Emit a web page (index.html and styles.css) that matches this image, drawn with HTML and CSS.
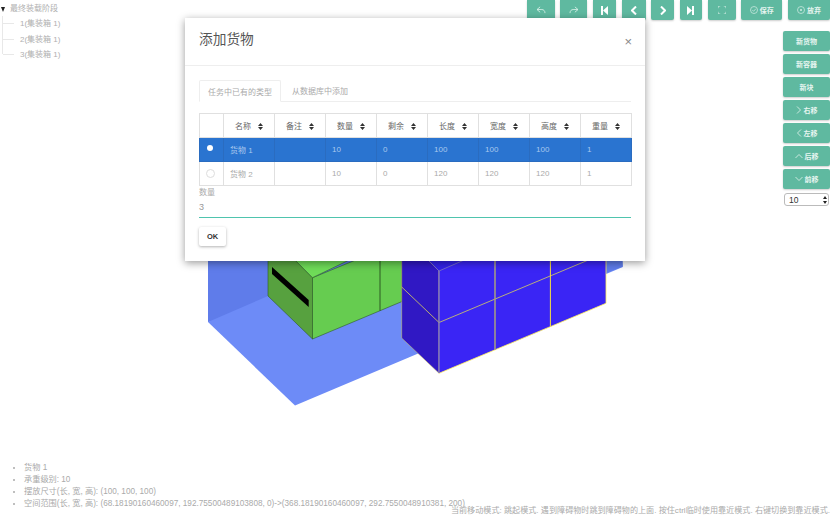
FILE: index.html
```html
<!DOCTYPE html>
<html lang="zh">
<head>
<meta charset="utf-8">
<title>添加货物</title>
<link rel="stylesheet" href="styles.css">
</head>
<body>
<svg class="scene" width="830" height="518" viewBox="0 0 830 518">
  <polygon fill="#5f7cea" points="208,250 622,250 622.7,267 208,322"/>
  <polygon fill="#6d8bf7" points="208,322 295,405.5 622.7,267 606,250 268,296"/>
  <polygon fill="#5f7cea" points="606,250 622,250 622.7,266.5 606,273"/>
  <polygon fill="#57a13f" stroke="#2d5a22" stroke-width=".6" points="268,250 268,296 312.5,339 312.5,277.7 296,261 285,250"/>
  <polygon fill="#66cc50" stroke="#2d5a22" stroke-width=".6" points="312.5,277.7 312.5,339 402,301.5 402,250 380,250"/>
  <polygon fill="#6fdc58" stroke="#2d5a22" stroke-width=".6" points="285,250 312.5,277.7 370,250"/>
  <line x1="380" y1="250" x2="380" y2="310.7" stroke="#1f3f18" stroke-width=".8"/>
  <polygon fill="#000" points="272,267 308.7,300 308.7,307 272,274"/>
  <polygon fill="#3018c4" stroke="#d8cf60" stroke-width=".5" points="401.7,250 401.7,338 439,373.3 439,271 418,250"/>
  <polygon fill="#3a25f5" points="439,271 439,373.3 606,303.3 606,250 487,250"/>
  <polygon fill="#3322e8" points="418,250 439,271 487,250"/>
  <polyline fill="none" stroke="#fff05a" stroke-width=".8" points="439,373.3 606,303.3 606,250"/>
  <polyline fill="none" stroke="#d8d060" stroke-width=".8" points="401.7,287 439,322.5 586,261 612,250"/>
  <line x1="439" y1="271" x2="439" y2="373" stroke="#8a80b8" stroke-width="1.4"/>
  <line x1="495" y1="250" x2="495" y2="350" stroke="#a8a080" stroke-width="1.5"/>
  <line x1="550.4" y1="250" x2="550.4" y2="326.5" stroke="#f5e040" stroke-width="1"/>
  <polyline fill="none" stroke="#7f74c0" stroke-width=".8" points="418,250 439,271 487,250"/>
</svg>

<div class="app">
  <div class="main">
    <nav class="tree">
      <div class="tree-root"><span class="caret"></span>最终装载阶段</div>
      <ul class="tree-list">
        <li>1(集装箱 1)</li>
        <li>2(集装箱 1)</li>
        <li>3(集装箱 1)</li>
      </ul>
    </nav>
    <div class="controls">
      <div class="toolbar">
        <button class="btn tool w28"><svg width="10" height="8" viewBox="0 0 11 9"><path d="M4.500 1 1 4l3.500 3M1 4h5.500c2 0 3.500 1.500 3.500 4" fill="none" stroke="#d5eee6" stroke-width="1"/></svg></button>
        <button class="btn tool w27"><svg width="10" height="8" viewBox="0 0 11 9"><path d="M6.500 1 10 4 6.500 7M10 4H4.500C2.500 4 1 5.500 1 8" fill="none" stroke="#d5eee6" stroke-width="1"/></svg></button>
        <button class="btn tool w23"><svg width="7" height="9" viewBox="0 0 7 9"><path d="M0 0h2v9H0zM7 0v9L2 4.500z" fill="#fff"/></svg></button>
        <button class="btn tool w24"><svg width="6" height="9" viewBox="0 0 6 9"><path d="M5 .5 1 4.500 5 8.500" fill="none" stroke="#fff" stroke-width="2"/></svg></button>
        <button class="btn tool w23"><svg width="6" height="9" viewBox="0 0 6 9"><path d="M1 .5 5 4.500 1 8.500" fill="none" stroke="#fff" stroke-width="2"/></svg></button>
        <button class="btn tool w22"><svg width="7" height="9" viewBox="0 0 7 9"><path d="M7 0H5v9h2zM0 0v9l5-4.500z" fill="#fff"/></svg></button>
        <button class="btn tool w28"><svg width="8" height="8" viewBox="0 0 9 9"><path d="M0 2.500V0h2.500M6.500 0H9v2.500M9 6.500V9H6.500M2.500 9H0V6.500" fill="none" stroke="#d5eee6" stroke-width="1"/></svg></button>
        <button class="btn tool w41"><svg class="lead" width="8" height="8" viewBox="0 0 8 8"><circle cx="4" cy="4" r="3.500" fill="none" stroke="#d5eee6" stroke-width=".7"/><path d="M2.300 4 3.600 5.300 5.800 2.800" fill="none" stroke="#d5eee6" stroke-width=".7"/></svg>保存</button>
        <button class="btn tool w42"><svg class="lead" width="8" height="8" viewBox="0 0 8 8"><circle cx="4" cy="4" r="3.500" fill="none" stroke="#d5eee6" stroke-width=".7"/><circle cx="4" cy="4" r="1" fill="#d5eee6"/></svg>放弃</button>
      </div>
      <div class="side">
        <button class="btn side-btn">新货物</button>
        <button class="btn side-btn">新容器</button>
        <button class="btn side-btn">新块</button>
        <button class="btn side-btn"><svg class="lead" width="6" height="8" viewBox="0 0 6 8"><path d="M1 .5 4.500 4 1 7.500" fill="none" stroke="#e4f4ef" stroke-width=".8"/></svg>右移</button>
        <button class="btn side-btn"><svg class="lead" width="6" height="8" viewBox="0 0 6 8"><path d="M5 .5 1.500 4 5 7.500" fill="none" stroke="#e4f4ef" stroke-width=".8"/></svg>左移</button>
        <button class="btn side-btn"><svg class="lead" width="8" height="6" viewBox="0 0 8 6"><path d="M.5 5 4 1.500 7.500 5" fill="none" stroke="#e4f4ef" stroke-width=".8"/></svg>后移</button>
        <button class="btn side-btn"><svg class="lead" width="8" height="6" viewBox="0 0 8 6"><path d="M.5 1 4 4.500 7.500 1" fill="none" stroke="#e4f4ef" stroke-width=".8"/></svg>前移</button>
        <div class="select-wrap">
          <select class="step"><option>10</option></select>
          <svg class="select-arrows" width="4" height="8" viewBox="0 0 4 8"><path d="M2 0 4 3H0zM2 8 0 5h4z" fill="#222"/></svg>
        </div>
      </div>
    </div>
  </div>
  <footer class="footer">
    <ul class="info">
      <li>货物 1</li>
      <li>承重级别: 10</li>
      <li>摆放尺寸(长, 宽, 高): (100, 100, 100)</li>
      <li>空间范围(长, 宽, 高): (68.18190160460097, 192.75500489103808, 0)-&gt;(368.18190160460097, 292.7550048910381, 200)</li>
    </ul>
  </footer>
  <p class="status">当前移动模式: 跳起模式. 遇到障碍物时跳到障碍物的上面. 按住ctrl临时使用靠近模式. 右键切换到靠近模式.</p>
</div>

<section class="modal">
  <header class="modal-head">
    <h2 class="modal-title">添加货物</h2>
    <span class="close">×</span>
  </header>
  <div class="modal-body">
    <div class="tabs">
      <span class="tab active">任务中已有的类型</span>
      <span class="tab">从数据库中添加</span>
    </div>
    <table class="goods">
      <colgroup>
        <col class="c-radio"><col class="c"><col class="c"><col class="c"><col class="c"><col class="c"><col class="c"><col class="c"><col class="c">
      </colgroup>
      <thead>
        <tr>
          <th></th>
          <th>名称<svg class="sort" width="5" height="7" viewBox="0 0 5 7"><path d="M2.500 0 5 3H0zM2.500 7 0 4h5z"/></svg></th>
          <th>备注<svg class="sort" width="5" height="7" viewBox="0 0 5 7"><path d="M2.500 0 5 3H0zM2.500 7 0 4h5z"/></svg></th>
          <th>数量<svg class="sort" width="5" height="7" viewBox="0 0 5 7"><path d="M2.500 0 5 3H0zM2.500 7 0 4h5z"/></svg></th>
          <th>剩余<svg class="sort" width="5" height="7" viewBox="0 0 5 7"><path d="M2.500 0 5 3H0zM2.500 7 0 4h5z"/></svg></th>
          <th>长度<svg class="sort" width="5" height="7" viewBox="0 0 5 7"><path d="M2.500 0 5 3H0zM2.500 7 0 4h5z"/></svg></th>
          <th>宽度<svg class="sort" width="5" height="7" viewBox="0 0 5 7"><path d="M2.500 0 5 3H0zM2.500 7 0 4h5z"/></svg></th>
          <th>高度<svg class="sort" width="5" height="7" viewBox="0 0 5 7"><path d="M2.500 0 5 3H0zM2.500 7 0 4h5z"/></svg></th>
          <th>重量<svg class="sort" width="5" height="7" viewBox="0 0 5 7"><path d="M2.500 0 5 3H0zM2.500 7 0 4h5z"/></svg></th>
        </tr>
      </thead>
      <tbody>
        <tr class="selected">
          <td class="radio-cell"><span class="radio on"></span></td>
          <td>货物 1</td><td></td><td>10</td><td>0</td><td>100</td><td>100</td><td>100</td><td>1</td>
        </tr>
        <tr>
          <td class="radio-cell"><span class="radio"></span></td>
          <td>货物 2</td><td></td><td>10</td><td>0</td><td>120</td><td>120</td><td>120</td><td>1</td>
        </tr>
      </tbody>
    </table>
    <label class="field-label">数量</label>
    <div class="field-input">3</div>
    <button class="ok">OK</button>
  </div>
</section>
</body>
</html>
```
FILE: styles.css
```css
* { box-sizing: border-box; }
html, body { margin: 0; height: 518px; overflow: hidden; background: #fff; }
body {
  position: relative;
  font-family: "Liberation Sans", "Noto Sans CJK SC", sans-serif;
  font-size: 8px;
  color: #aaa;
}
.scene { position: absolute; left: 0; top: 0; }
.app {
  position: relative;
  display: flex;
  flex-direction: column;
  height: 518px;
}
.main { flex: 1; display: flex; justify-content: space-between; }

.tree { padding: 4px 0 0 1px; line-height: 15.5px; color: #b0b0b0; }
.tree-root { display: flex; align-items: center; height: 9px; margin-bottom: 3px; padding-top: 1px; }
.caret {
  width: 0; height: 0;
  margin-right: 5px;
  border-left: 2.500px solid transparent;
  border-right: 2.500px solid transparent;
  border-top: 5px solid #222;
}
.tree-list { list-style: none; margin: 0 0 0 1px; padding: 0; border-left: 1px solid #e8e8e8; height: 38px; }
.tree-list li { padding-left: 17px; height: 15.500px; background: linear-gradient(#e8e8e8, #e8e8e8) no-repeat 0 7px / 11px 1px; }

.controls { display: flex; flex-direction: column; align-items: flex-end; }
.btn {
  display: flex; align-items: center; justify-content: center;
  border: 0; padding: 0;
  background: #5fb9a0;
  color: #e6f5f0;
  font: bold 7px "Liberation Sans", "Noto Sans CJK SC", sans-serif;
  border-radius: 2px;
  box-shadow: 0 1px 2px rgba(0,0,0,.2);
}
.toolbar { display: flex; gap: 5.700px; }
.tool { height: 20px; border-radius: 0 0 2px 2px; }
.w22 { width: 22px; }
.w23 { width: 23px; }
.w24 { width: 24px; }
.w27 { width: 27px; }
.w28 { width: 28px; }
.w41 { width: 41px; }
.w42 { width: 42px; }
.lead { margin-right: 2px; }
.side { display: flex; flex-direction: column; gap: 3px; margin-top: 11px; width: 47px; }
.side-btn { height: 20px; width: 47px; }
.select-wrap { position: relative; width: 45px; margin: 1px 0 0 1px; }
.step {
  appearance: none;
  display: block;
  width: 45px; height: 13px;
  padding: 0 0 0 4px;
  background: #fff;
  border: 1px solid #bbb;
  border-radius: 3px;
  font: 8.500px "Liberation Sans", sans-serif;
  color: #333;
}
.select-arrows { position: absolute; right: 2px; top: 3px; }

.footer { padding: 0 0 8px 0; }
.info { margin: 0; padding: 0 0 0 24px; line-height: 12px; color: #aaa; font-size: 8.200px; }
.info li { white-space: nowrap; }
.status {
  position: absolute; right: 0; bottom: 1px; margin: 0;
  white-space: nowrap; line-height: 12px; color: #aaa; font-size: 8.100px;
}

.modal {
  position: absolute; left: 185px; top: 18px;
  width: 460px; height: 243px;
  background: #fff;
  box-shadow: 0 2px 8px rgba(0,0,0,.4);
}
.modal-head {
  display: flex; align-items: center; justify-content: space-between;
  height: 48px; padding: 0 13px 7px 14px;
  border-bottom: 1px solid #eee;
}
.modal-title { margin: 0; font-size: 13.700px; font-weight: normal; color: #555; }
.close { font-size: 13px; color: #888; position: relative; top: 3px; }
.modal-body { padding: 14px 14px 0; }
.tabs { display: flex; height: 22px; border-bottom: 1px solid #eee; }
.tab { display: flex; align-items: center; padding: 0 8px; margin-right: 3px; color: #aaa; }
.tab.active {
  height: 22px;
  border: 1px solid #eee; border-bottom: 1px solid #fff;
  border-radius: 2px 2px 0 0;
}
.goods {
  table-layout: fixed;
  border-collapse: collapse;
  width: 432px;
  margin-top: 11px;
}
.c-radio { width: 24px; }
.c { width: 51px; }
.goods th, .goods td { border: 1px solid #e0e0e0; height: 24px; padding: 0 0 0 6px; text-align: left; font-weight: normal; color: #aaa; }
.goods th { color: #666; text-align: center; padding: 0; }
.sort { margin-left: 7px; vertical-align: -1px; fill: #333; }
.selected td { background: #2a74d0; color: #a9c8ee; border-color: #2a6cc0; }
.goods td.radio-cell { padding: 0 0 0 6px; }
.radio { display: block; width: 9px; height: 9px; border-radius: 50%; border: 1px solid #ddd; }
.radio.on { width: 6px; height: 6px; margin: -3px 0 0 1px; background: #fff; border: 0; }
.field-label { display: block; margin-top: 2px; line-height: 10px; color: #aaa; }
.field-input {
  height: 20px; padding-top: 3px; line-height: 12px; font-size: 9px;
  border-bottom: 1px solid #4fc4ae; color: #999;
}
.ok {
  display: block;
  width: 27px; height: 19px;
  margin-top: 9px; padding: 0;
  border: 0; background: #fff;
  border-radius: 2px;
  box-shadow: 0 1px 3px rgba(0,0,0,.3);
  font: bold 7.500px "Liberation Sans", sans-serif;
  color: #333;
}
```
